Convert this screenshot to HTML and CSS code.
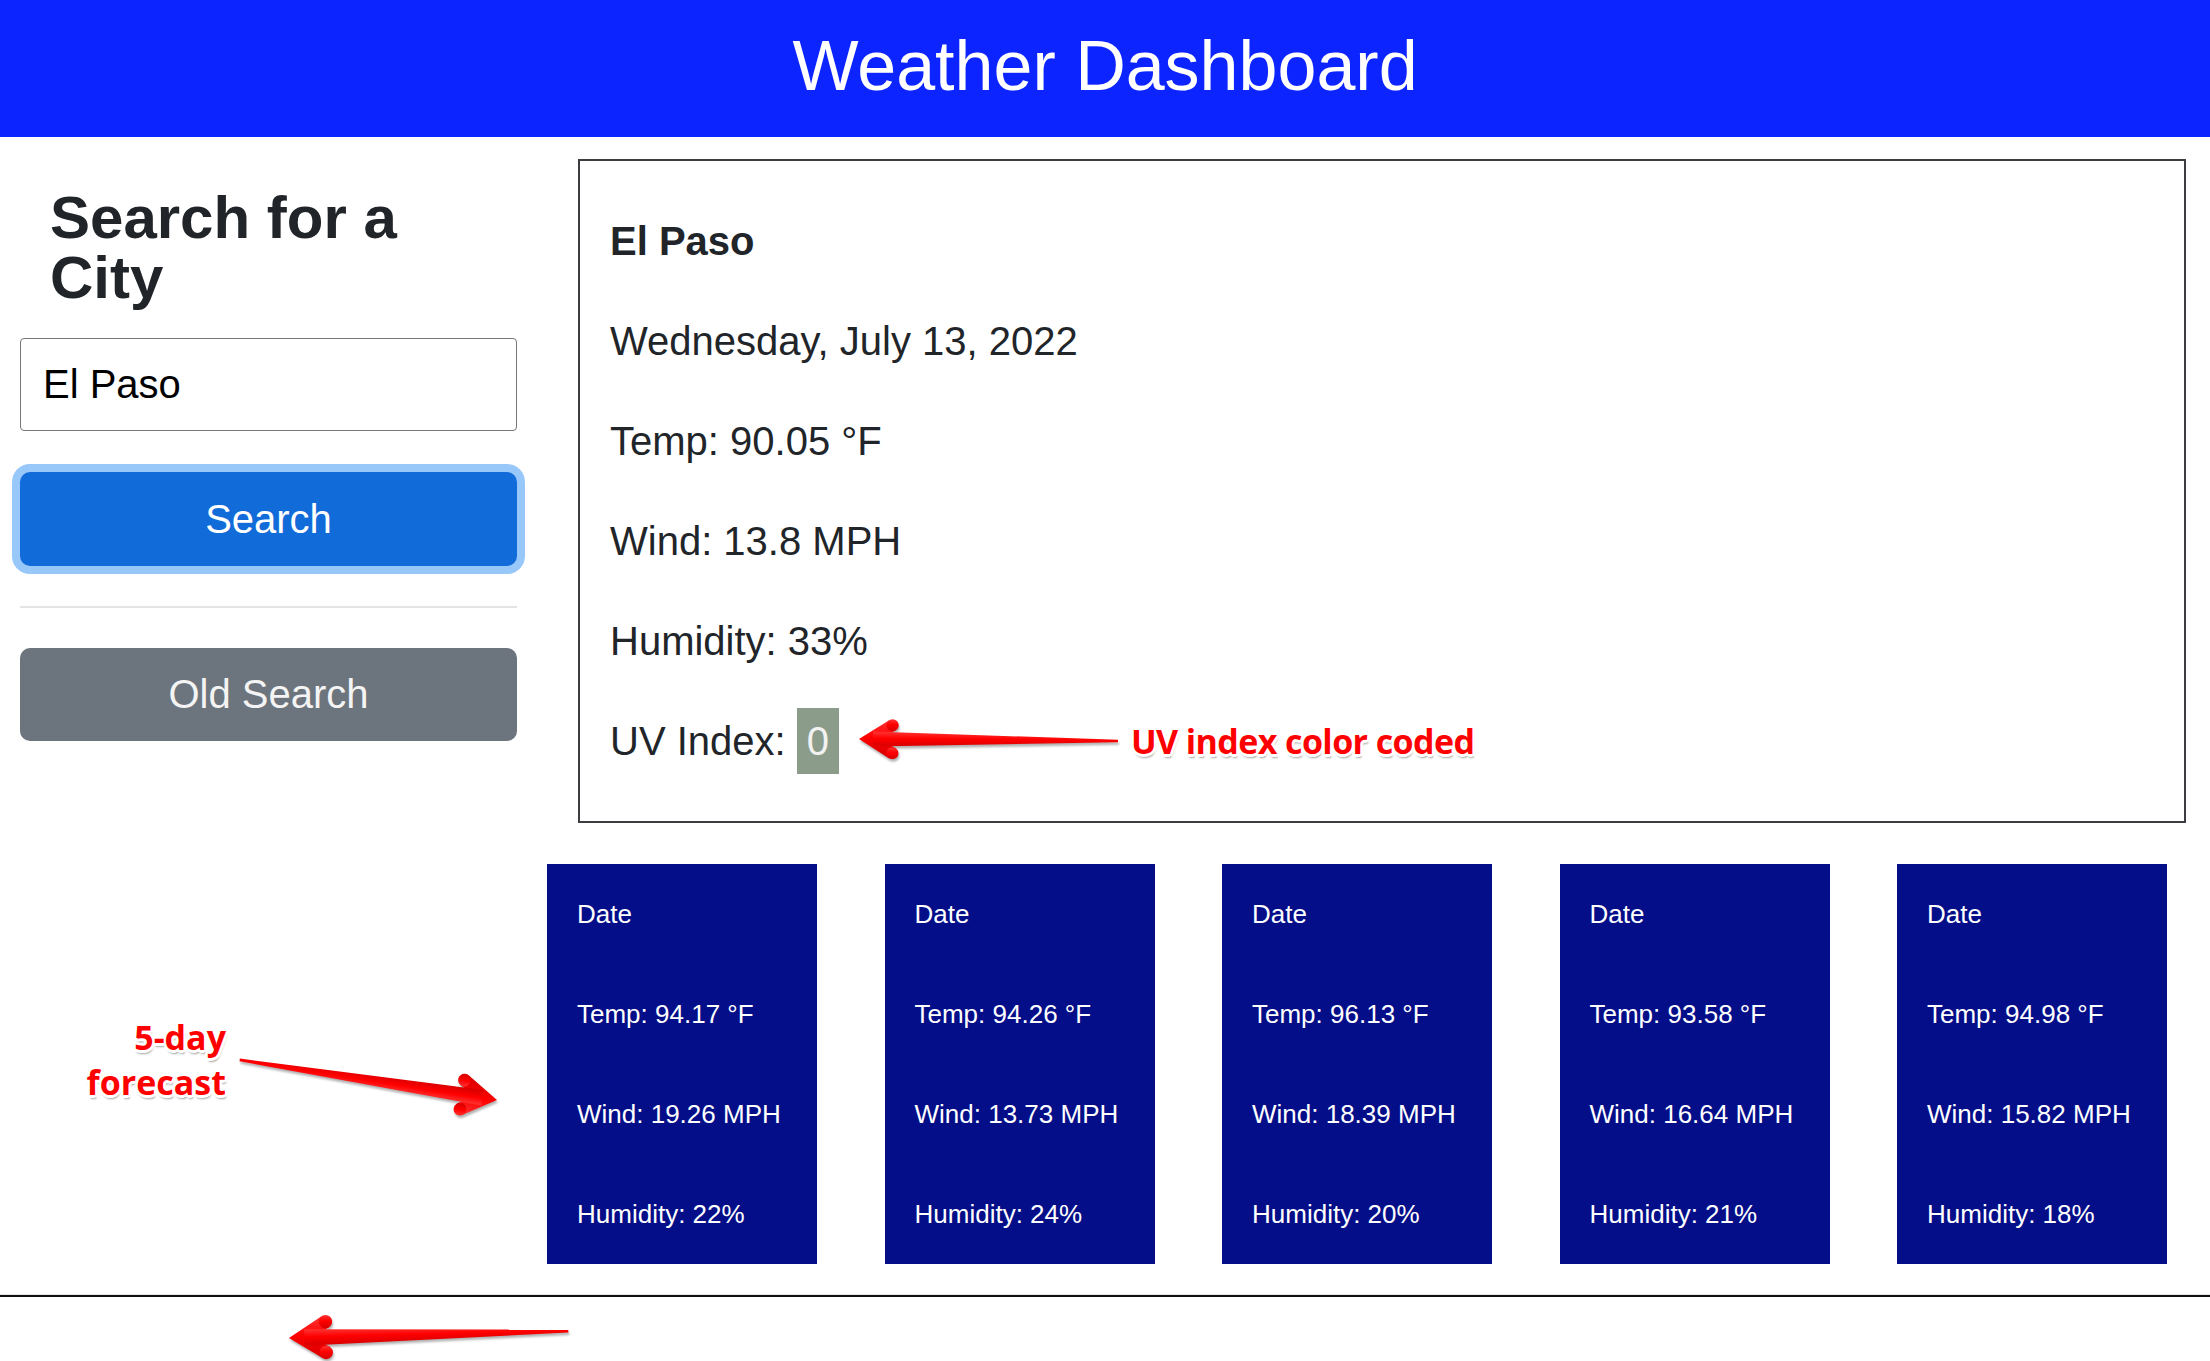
FILE: index.html
```html
<!DOCTYPE html>
<html lang="en">
<head>
<meta charset="utf-8">
<title>Weather Dashboard</title>
<link rel="stylesheet" href="styles.css">
</head>
<body>
<header class="topbar">
  <h1 class="title">Weather Dashboard</h1>
</header>
<main class="layout">
  <aside class="sidebar">
    <h2 class="search-title">Search for a City</h2>
    <input class="city-input" type="text" value="El Paso">
    <button class="btn btn-search">Search</button>
    <hr class="divider">
    <button class="btn btn-old">Old Search</button>
  </aside>
  <section class="content">
    <div class="current">
      <p class="city">El Paso</p>
      <p>Wednesday, July 13, 2022</p>
      <p>Temp: 90.05 °F</p>
      <p>Wind: 13.8 MPH</p>
      <p>Humidity: 33%</p>
      <p>UV Index: <span class="uv">0</span></p>
    </div>
    <div class="forecast">
      <div class="day"><p>Date</p><p>Temp: 94.17 °F</p><p>Wind: 19.26 MPH</p><p>Humidity: 22%</p></div>
      <div class="day"><p>Date</p><p>Temp: 94.26 °F</p><p>Wind: 13.73 MPH</p><p>Humidity: 24%</p></div>
      <div class="day"><p>Date</p><p>Temp: 96.13 °F</p><p>Wind: 18.39 MPH</p><p>Humidity: 20%</p></div>
      <div class="day"><p>Date</p><p>Temp: 93.58 °F</p><p>Wind: 16.64 MPH</p><p>Humidity: 21%</p></div>
      <div class="day"><p>Date</p><p>Temp: 94.98 °F</p><p>Wind: 15.82 MPH</p><p>Humidity: 18%</p></div>
    </div>
  </section>
</main>
<hr class="rule">

<svg class="annotations" width="2210" height="1361" viewBox="0 0 2210 1361" xmlns="http://www.w3.org/2000/svg">
  <defs>
    <linearGradient id="red" x1="0" y1="0" x2="0" y2="1">
      <stop offset="0" stop-color="#ff3434"/>
      <stop offset="0.45" stop-color="#ff0000"/>
      <stop offset="1" stop-color="#d60000"/>
    </linearGradient>
    <filter id="soft" x="-10%" y="-60%" width="120%" height="220%">
      <feGaussianBlur stdDeviation="1.2"/>
    </filter>
    <g id="arrow1" transform="translate(859 739) rotate(0.44)">
      <polygon points="0,0 30,-19 37,-9 20,0 37,9 30,19"/>
      <circle cx="33.5" cy="-14" r="6.1"/>
      <circle cx="33.5" cy="14" r="6.1"/>
      <polygon points="14,-7.5 259,-1.3 259,1.3 14,7.5"/>
    </g>
    <g id="arrow2" transform="translate(497 1100) rotate(188.85) scale(1.05)">
      <polygon points="0,0 30,-19 37,-9 20,0 37,9 30,19"/>
      <circle cx="33.5" cy="-14" r="6.1"/>
      <circle cx="33.5" cy="14" r="6.1"/>
      <polygon points="14,-7.5 248,-1.3 248,1.3 14,7.5"/>
    </g>
    <g id="arrow3" transform="translate(289 1338) rotate(-1.44) scale(1.1)">
      <polygon points="0,0 30,-19 37,-9 20,0 37,9 30,19"/>
      <circle cx="33.5" cy="-14" r="6.1"/>
      <circle cx="33.5" cy="14" r="6.1"/>
      <polygon points="14,-7.5 254,-1.3 254,1.3 14,7.5"/>
    </g>
  </defs>
  <use href="#arrow1" transform="translate(1 2.5)" fill="#555" opacity="0.45" filter="url(#soft)"/>
  <use href="#arrow1" fill="url(#red)"/>
  <use href="#arrow2" transform="translate(1 2.5)" fill="#555" opacity="0.45" filter="url(#soft)"/>
  <use href="#arrow2" fill="url(#red)"/>
  <use href="#arrow3" transform="translate(1 2.5)" fill="#555" opacity="0.45" filter="url(#soft)"/>
  <use href="#arrow3" fill="url(#red)"/>
</svg>
<div class="note note-uv">UV index color coded</div>
<div class="note note-forecast">5-day<br>forecast</div>
</body>
</html>
```

FILE: styles.css
```css
html, body {
  margin: 0;
  padding: 0;
}

body {
  position: relative;
  width: 2210px;
  height: 1361px;
  overflow: hidden;
  background: #fff;
  color: #212529;
  font-family: "Liberation Sans", Arial, Helvetica, sans-serif;
}

.topbar {
  height: 137px;
  background: #0c24ff;
  text-align: center;
}

.title {
  margin: 0;
  font-size: 70px;
  font-weight: 400;
  line-height: 132px;
  color: #fff;
}

.layout {
  display: flex;
  align-items: flex-start;
  gap: 61px;
  padding: 22px 24px 0 20px;
}

.sidebar {
  flex: none;
  width: 497px;
  display: flex;
  flex-direction: column;
}

.search-title {
  margin: 29px 0 0 30px;
  width: 440px;
  font-size: 60px;
  line-height: 60px;
  font-weight: 700;
  color: #212529;
}

.city-input {
  margin-top: 30px;
  width: 100%;
  height: 93px;
  box-sizing: border-box;
  border: 1px solid #767676;
  border-radius: 4px;
  padding: 0 22px;
  font-family: "Liberation Sans", Arial, Helvetica, sans-serif;
  font-size: 40px;
  color: #000;
  background: #fff;
  outline: none;
}

.btn {
  width: 100%;
  box-sizing: border-box;
  border: 0;
  border-radius: 10px;
  padding: 0;
  color: #fff;
  font-family: "Liberation Sans", Arial, Helvetica, sans-serif;
  font-size: 40px;
  text-align: center;
}

.btn-search {
  margin-top: 41px;
  height: 94px;
  line-height: 94px;
  background: #116bd9;
  box-shadow: 0 0 0 8px #98c8fa;
}

.divider {
  margin: 40px 0 0;
  width: 100%;
  height: 0;
  border: 0;
  border-top: 2px solid #e4e4e4;
}

.btn-old {
  margin-top: 40px;
  height: 93px;
  line-height: 93px;
  background: #6c757d;
  color: #f4f4f4;
}

.content {
  flex: 1;
  min-width: 0;
}

.current {
  border: 2px solid #3c3d41;
  padding: 50px 30px 50px;
}

.current p {
  margin: 0 0 40px;
  font-size: 40px;
  line-height: 60px;
}

.current p:last-child {
  margin-bottom: 0;
}

.current .city {
  font-weight: 700;
}

.uv {
  background: #8b9d8a;
  color: #f2f2f2;
  padding: 10.6px 10px;
}

.forecast {
  display: flex;
  gap: 67.5px;
  width: 1620px;
  margin: 41px 0 0 -31px;
}

.day {
  flex: none;
  width: 270px;
  box-sizing: border-box;
  padding: 35px 30px;
  background: #030e88;
  color: #fff;
  display: flex;
  flex-direction: column;
  gap: 70px;
}

.day p {
  margin: 0;
  font-size: 26px;
  line-height: 30px;
}

.rule {
  margin: 30px 0 0;
  height: 0;
  border: 0;
  border-top: 1px solid #e6e6e6;
  border-bottom: 2px solid #111;
}

.annotations {
  position: absolute;
  left: 0;
  top: 0;
  pointer-events: none;
}

.note {
  position: absolute;
  font-family: "Open Sans", "Liberation Sans", sans-serif;
  font-weight: 700;
  font-size: 34px;
  line-height: 45px;
  color: #ff0000;
  white-space: nowrap;
  text-shadow:
    -2px -2px 0 #fff, 2px -2px 0 #fff, -2px 2px 0 #fff, 2px 2px 0 #fff,
    0 -2.5px 0 #fff, 0 2.5px 0 #fff, -2.5px 0 0 #fff, 2.5px 0 0 #fff,
    1px 4px 2px rgba(0, 0, 0, 0.35);
}

.note-uv {
  left: 1131px;
  top: 719px;
  letter-spacing: -0.6px;
}

.note-forecast {
  right: 1984px;
  top: 1015px;
  text-align: right;
}
```
